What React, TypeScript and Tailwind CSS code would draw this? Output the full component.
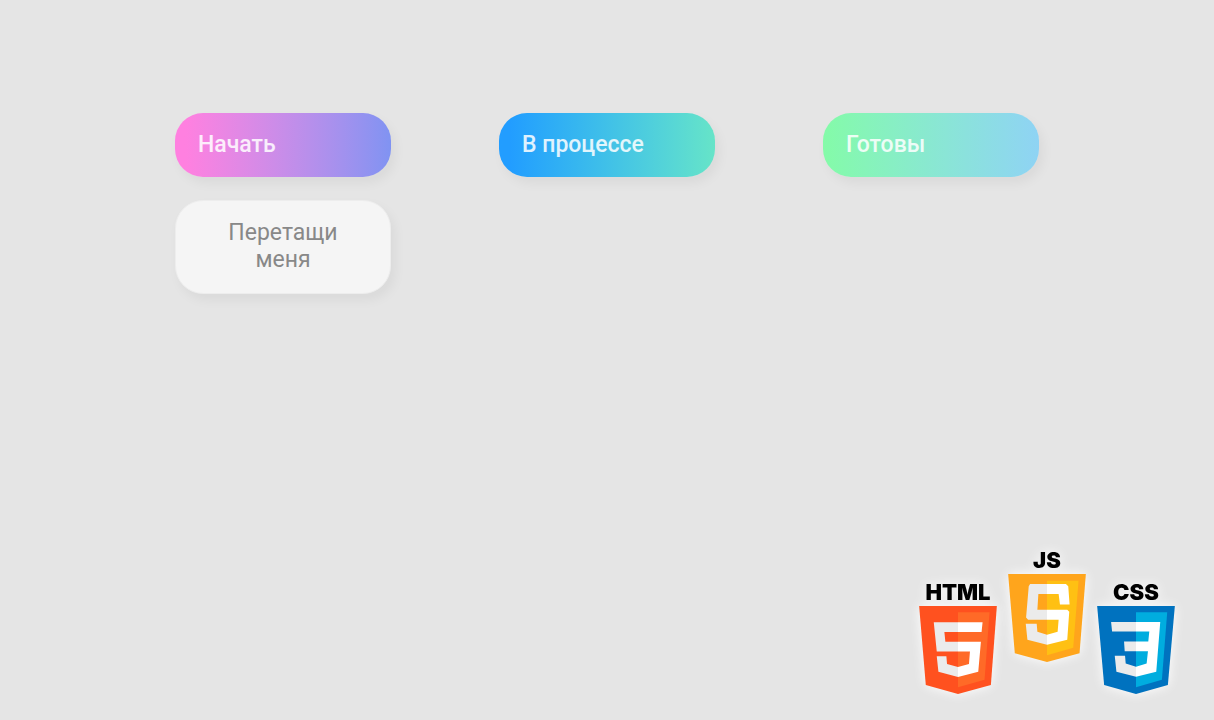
import type { ReactNode } from "react";

const columns = [
  { title: "Начать", tone: "from-[#ff80e0] from-5% to-[#8093f2]", cards: ["Перетащи меня"] },
  { title: "В процессе", tone: "from-[#229dff] from-5% to-[#66e4c8]", cards: [] },
  { title: "Готовы", tone: "from-[#84fba8] to-[#8fd3f4]", cards: [] },
];

function Badge({ label, children }: { label: string; children: ReactNode }) {
  return (
    <div className="flex flex-col items-center drop-shadow-[0_0_6px_#ffffff]">
      <span className="h-6 font-[Inter,sans-serif] text-[22px] leading-5 font-black text-black">{label}</span>
      <svg viewBox="0 0 234 265" className="h-[88px] w-[78px]" aria-hidden="true">
        {children}
      </svg>
    </div>
  );
}

export default function App() {
  return (
    <div className="flex min-h-screen flex-col justify-between bg-[#e5e5e5] font-[Roboto,sans-serif]">
      <main className="mx-auto grid w-full max-w-[864px] grid-cols-3 gap-[108px] pt-[113px]">
        {columns.map((column) => (
          <section key={column.title} className="flex flex-col gap-[23px]">
            <h2
              className={`flex h-16 items-center rounded-[28px] bg-linear-to-r px-[23px] text-[23px] font-medium text-white/85 shadow-[4px_6px_12px_rgba(0,0,0,0.05)] ${column.tone}`}
            >
              {column.title}
            </h2>
            {column.cards.map((card) => (
              <div
                key={card}
                draggable
                className="cursor-grab rounded-[28px] border border-[#ededed] bg-[#f5f5f5] px-10 pt-[18px] pb-5 text-center text-[23px] leading-[27px] text-[#888888] shadow-[4px_6px_12px_rgba(0,0,0,0.05)]"
              >
                {card}
              </div>
            ))}
          </section>
        ))}
      </main>
      <footer className="flex items-end justify-end gap-[11px] pr-[39px] pb-[26px]">
        <Badge label="HTML">
          <path fill="#ff511f" d="M0 0H234L216 238L117 265L20 238Z" />
          <path fill="#ff6a27" d="M117 19H212L197 222L117 245Z" />
          <path fill="#ebebeb" d="M44 49H117V78H76L79 108H117V137H53ZM53 151H82L84 175L117 184V214L58 198Z" />
          <path fill="#ffffff" d="M117 49H191L188 78H117ZM117 108H186L178 198L117 214V184L150 175L153 137H117Z" />
        </Badge>
        <div className="pb-8">
          <Badge label="JS">
            <path fill="#ffa51c" d="M0 0H234L215 239L117 265L20 239Z" />
            <path fill="#ffc013" d="M117 20H212L196 222L117 245Z" />
            <path fill="#ebebeb" d="M66 30H117V60H91L88 108H117V138H60L54 131L62 37ZM53 150H86L88 174L117 183V213L58 198Z" />
            <path fill="#ffffff" d="M117 30H174L181 37L185 92H156L152 60H117ZM117 108H178L184 114L178 198L117 213V183L149 174L152 138H117Z" />
          </Badge>
        </div>
        <Badge label="CSS">
          <path fill="#0072bf" d="M0 0H234L213 238L117 265L21 238Z" />
          <path fill="#00addf" d="M117 19H211L195 222L117 245Z" />
          <path fill="#ebebeb" d="M42 48H117V77H45ZM81 107H117V136H83ZM53 150H84L86 173L117 183V213L58 198Z" />
          <path fill="#ffffff" d="M117 48H190L178 198L117 213V183L149 173L153 136H117V107H154L157 77H117Z" />
        </Badge>
      </footer>
    </div>
  );
}
